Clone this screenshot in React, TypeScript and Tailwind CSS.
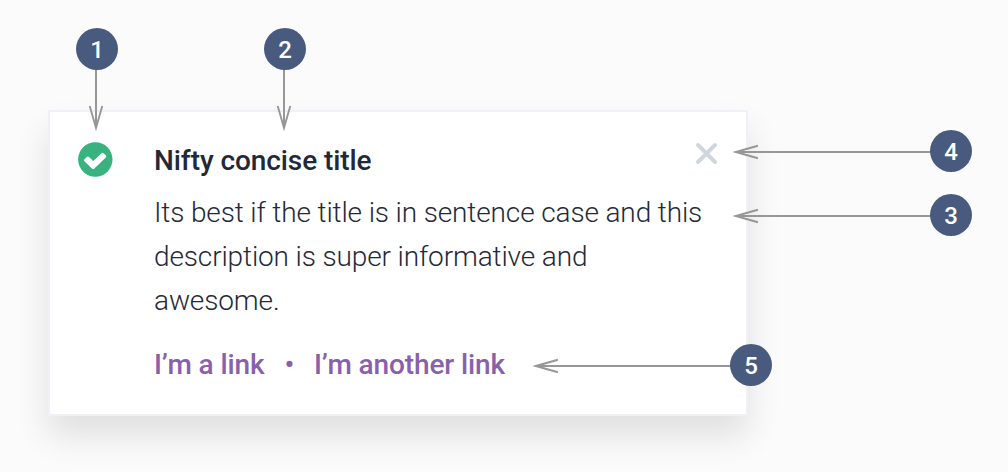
type MarkerProps = { label: string; place: string };

const Marker = ({ label, place }: MarkerProps) => (
  <span
    className={`absolute flex h-[42px] w-[42px] items-center justify-center rounded-full bg-[#485a7d] pt-px text-[24px] leading-none font-medium text-white ${place}`}
  >
    {label}
  </span>
);

const DownArrow = ({ place }: { place: string }) => (
  <svg className={`absolute ${place}`} width="16" height="62" viewBox="0 0 16 62" fill="none" stroke="#979797" strokeWidth="2">
    <path d="M8 0V57" />
    <path d="M2 38L8 59L14 38" strokeWidth="1.9" strokeLinecap="square" />
  </svg>
);

const LeftArrow = ({ place }: { place: string }) => (
  <svg className={`absolute ${place}`} width="200" height="16" viewBox="0 0 200 16" fill="none" stroke="#979797" strokeWidth="2">
    <path d="M5 8H200" />
    <path d="M24 2L3 8L24 14" strokeWidth="1.9" strokeLinecap="square" />
  </svg>
);

export default function App() {
  return (
    <div className="relative h-[472px] w-[1008px] overflow-hidden bg-[#fbfbfb] pt-[110px] pl-12 font-['Roboto',sans-serif]">
      <section className="flex h-[306px] w-[700px] items-start border-2 border-[#f0f0f6] bg-white pt-[27px] pr-7 pl-7 text-[28px] leading-[44px] text-[#1f2937] shadow-[0_20px_32px_rgba(0,0,0,0.11)]">
        <svg className="mt-[3px] shrink-0" width="35" height="35" viewBox="0 0 35 35">
          <circle cx="17.3" cy="17.5" r="17.2" fill="#38b27f" />
          <path
            d="M6.2 17.6L9 14.7Q10 14 11 14.9L15.2 19L23.6 11.3Q24.8 10.4 25.8 11.4L28 13.6Q28.7 14.5 27.8 15.4L16.4 26.6Q15.2 27.6 14 26.6L6.4 19.2Q5.5 18.4 6.2 17.6Z"
            fill="white"
          />
        </svg>
        <div className="ml-[41px] w-[552px] shrink-0">
          <h1 className="h-[52px] font-medium tracking-[-0.08px]">Nifty concise title</h1>
          <p className="font-light tracking-[-0.13px] whitespace-nowrap">
            Its best if the title is in sentence case and this
            <br />
            description is super informative and
            <br />
            awesome.
          </p>
          <nav className="mt-5 flex font-medium tracking-[-0.12px] whitespace-nowrap text-[#8860ab]">
            <a>I’m a link</a>
            <span className="mx-5">•</span>
            <a>I’m another link</a>
          </nav>
        </div>
        <svg className="-ml-[11px] mt-[3px] shrink-0" width="24" height="24" viewBox="0 0 24 24" fill="none" stroke="#cfd6e1" strokeWidth="3.9" strokeLinecap="round">
          <path d="M3 3L20 20M20 3L3 20" />
        </svg>
      </section>

      <DownArrow place="left-[88px] top-[69px]" />
      <DownArrow place="left-[276px] top-[69px]" />
      <LeftArrow place="left-[733px] top-[144px]" />
      <LeftArrow place="left-[733px] top-[208px]" />
      <LeftArrow place="left-[533px] top-[358px]" />
      <Marker label="1" place="left-[76px] top-[28px]" />
      <Marker label="2" place="left-[264px] top-[28px]" />
      <Marker label="4" place="left-[930px] top-[130px]" />
      <Marker label="3" place="left-[930px] top-[194px]" />
      <Marker label="5" place="left-[730px] top-[344px]" />
    </div>
  );
}
